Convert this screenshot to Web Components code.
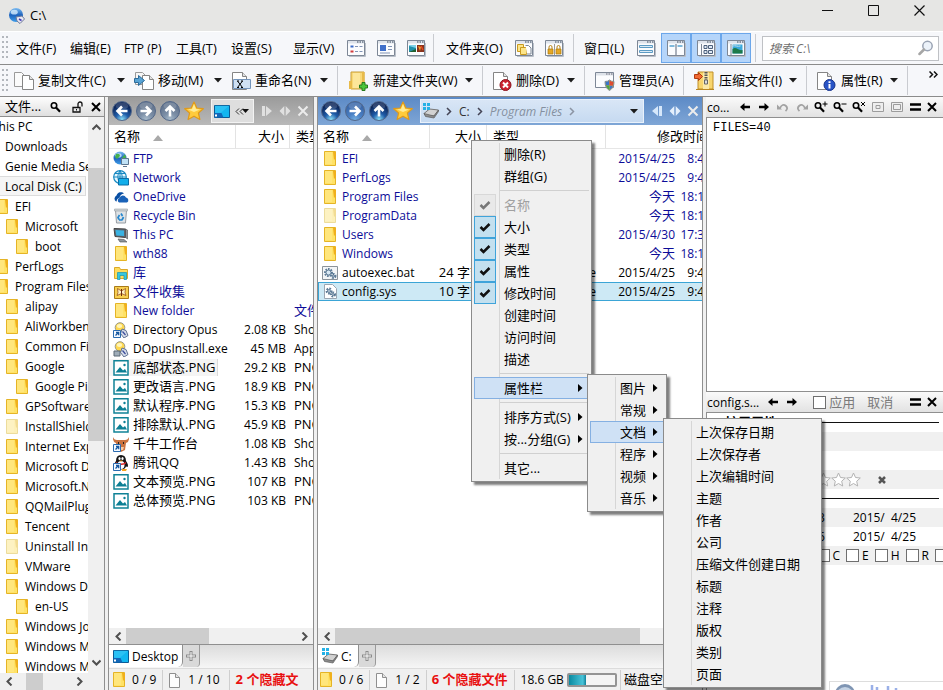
<!DOCTYPE html>
<html lang="zh-CN">
<head>
<meta charset="utf-8">
<title>C:\</title>
<style>
html,body{margin:0;height:100%;overflow:hidden}
body{font:12px/19px "Open Sans","Noto Sans CJK SC",sans-serif;color:#000;background:#e6e6e3}
</style>
</head>
<body>
<op-app></op-app>
<script>
const BASE=`*{box-sizing:border-box}
button{font:inherit;color:inherit;background:none;border:0;padding:0;margin:0;display:inline-flex;align-items:center;white-space:nowrap;cursor:default}
.cj{font-size:13px}`;
function define(tag,css,html){
  customElements.define(tag,class extends HTMLElement{
    connectedCallback(){
      if(this.shadowRoot)return;
      const t=document.createElement('template');
      t.innerHTML=`<style>${BASE}${css}</style>${typeof html==='function'?html(this):html}`;
      this.attachShadow({mode:'open'}).append(t.content.cloneNode(true));
    }
  });
}
const tx=s=>/[\u4e00-\u9fff]/.test(s)?`<span class="cj">${s}</span>`:`<span>${s}</span>`;
const ic=n=>`<op-icon name="${n}"></op-icon>`;

const win=b=>[20,20,`<path d="M1.5 2.500h17v15h-17z" fill="#fbfcfe" stroke="#7d8796"/><path d="M2 3h16v2.500H2z" fill="#dfe4ec"/><path d="M11 4h1.500M13.500 4h1.500M16 4h1.500" stroke="#6c7788" stroke-width="1.500"/><path d="M3 18.500h16.500V5" fill="none" stroke="#b9bfc8"/>${b}`];
const page='<path d="M1.500 1.500h6l4 4v10h-10z" fill="#fdfdfd" stroke="#8f8f8f"/><path d="M7.500 1.500v4h4" fill="#e4e4e4" stroke="#8f8f8f"/>';
const fold=(f,s,d)=>[12,15,`<path d="M.5.500h11v14H.5z" fill="${f}" stroke="${s}"/><path d="M9 1h3v6l-2 2z" fill="${d}"/><path d="M1 1h7v12H1z" fill="#fff" opacity=".15"/>`];
const globe=(x,y,r)=>`<circle cx="${x}" cy="${y}" r="${r}" fill="url(#g)"/><ellipse cx="${x-r/4}" cy="${y-r/2.500}" rx="${r/2}" ry="${r/3}" fill="#dff1ff" opacity=".75"/>`;
const gdef='<defs><linearGradient id="g" x1="0" y1="0" x2="0" y2="1"><stop stop-color="#7bbcf2"/><stop offset=".5" stop-color="#1d62bd"/><stop offset="1" stop-color="#3f9de8"/></linearGradient></defs>';
const orb=(a,b,c,arrow)=>[20,20,`<defs><radialGradient id="o" cx=".5" cy=".95" r=".85"><stop stop-color="${a}"/><stop offset=".4" stop-color="${b}"/><stop offset=".9" stop-color="${c}"/></radialGradient></defs><circle cx="10" cy="10" r="9.500" fill="url(#o)" stroke="#53688a"/><ellipse cx="10" cy="5" rx="6.500" ry="3.500" fill="#fff" opacity=".16"/><path d="${arrow}" fill="none" stroke="#fff" stroke-width="2.600"/>`];
const L='M15.500 10H6M10 5.500 5.500 10l4.500 4.500',R='M4.500 10H14M10 5.500 14.500 10 10 14.500',U='M10 15.500V6M5.500 10 10 5.500l4.500 4.500';
const glass=m=>[14,12,`<circle cx="4" cy="4.500" r="2.700" fill="none" stroke="#000" stroke-width="1.600"/><path d="m6 6.500 4 4.200" stroke="#000" stroke-width="2.200"/>${m}`];
const png='<path d="M1 .8h14v14.200H1z" fill="#fff" stroke="#108296" stroke-width="1.500"/><path d="M2.500 12.500 7 7l3 3.500 2-1.500 2 3.500z" fill="#0c7f94"/><circle cx="11.500" cy="5" r="1.200" fill="#0c7f94"/>';
const link='<path d="M.5 8.500h7v7h-7z" fill="#f4f9ff" stroke="#2a6bb0"/><path d="M2.500 13.500 5.500 10.500M3 10.500h2.700v2.800" fill="none" stroke="#1557a0" stroke-width="1.300"/>';
const gear=(x,y,r)=>`<circle cx="${x}" cy="${y}" r="${r}" fill="none" stroke="#5d7c98" stroke-width="2" stroke-dasharray="1.600 1"/><circle cx="${x}" cy="${y}" r="${r-1}" fill="#d9e9f5" stroke="#41617e" stroke-width=".8"/>`;
const lens='<circle cx="7" cy="5.500" r="4.800" fill="#ffd84f" stroke="#9a9a8a"/><ellipse cx="6.500" cy="4" rx="2.700" ry="2" fill="#fff5b8"/><path d="m9 7 4 1.500 2 5-4 2.500-3.500-4.500z" fill="#d5dce9" stroke="#5f7192"/><path d="m9.500 9.500 3 3.500" stroke="#3a4b99" stroke-width="1.200"/>';
const ICONS={
 app:[18,18,gdef+globe(8,8,7)+'<path d="m8 10 6-1 2.500 3-4.500 4.500L9 14z" fill="#e8ebf4" stroke="#6d7899"/><path d="m11 12 2.500 1.500" stroke="#433bb4" stroke-width="1.500"/>'],
 tri:[8,5,'<path d="M0 0h8L4 4.500z" fill="#1c1c1c"/>'],
 sort:[10,6,'<path d="M0 6h10L5 0z" fill="#a9a9a9"/>'],
 v1:win('<path d="M4.500 13.500h3" stroke="#d23a3a" stroke-width="2"/><path d="M4.500 8.500h3" stroke="#3a6bc9" stroke-width="2"/><path d="M9 8.500h3M13.500 8.500h3M9 13.500h3M13.500 13.500h3" stroke="#8193b4"/>'),
 v2:win('<path d="M4 7h6v6H4z" fill="#3f6fca"/><path d="M12 8.500h4M12 11.500h4M4 15h10" stroke="#8193b4"/>'),
 v3:win('<path d="M3 7h7v7H3z" fill="#1f90ab"/><path d="M3 7h7v3L3 8z" fill="#7fd3ea"/><path d="m3 14 7-3v3z" fill="#22612f"/><path d="M11 7h7v7h-7z" fill="#87321c"/><path d="m12 8 3 1-1 4z" fill="#f0a030"/><path d="m15 8 2 4" stroke="#e24a20" stroke-width="1.500"/>'),
 f1:win('<path d="M3.500 6.500h6v7h-6z" fill="#fce58a" stroke="#c99a1f"/><path d="M6.500 9.500h6v7h-6z" fill="#fce58a" stroke="#c99a1f"/><path d="M11.500 7.500h3l2.500 2.500v6h-4" fill="#fff" stroke="#7d8796"/>'),
 f2:win('<path d="M4 11h5v5H4zM12 11h5v5h-5z" fill="#e5a826" stroke="#ab7508" stroke-width=".7"/><path d="M5 11V9a1.500 1.500 0 0 1 3 0v2M13 11V9a1.500 1.500 0 0 1 3 0v2" fill="none" stroke="#b9841a"/><path d="M10.500 6v11" stroke="#999"/>'),
 w1:win('<path d="M3.500 7.500h13v2h-13zM3.500 12.500h13v2h-13z" fill="#dcebf6" stroke="#5c9bc4"/>'),
 w2:win('<path d="M10 6v11" stroke="#7d8796" stroke-width="1.300"/><path d="M3.500 8h5M11.500 8h5" stroke="#58a2cf" stroke-width="1.600"/>'),
 w3:win('<path d="M5.500 6v11" stroke="#7d8796"/><path d="M8 7.500h3v3H8zM12.500 7.500h4v3h-4zM8 12.500h3v3H8zM12.500 12.500h4v3h-4z" fill="#dfe9f4" stroke="#4d607c"/>'),
 w4:win('<path d="M5 6v11" stroke="#7d8796"/><path d="M6.500 6.500h10v9h-10z" fill="#3aa9dc"/><path d="M6.500 11c4-3 5 2 10 1v3.500h-10z" fill="#1d7a4a"/><path d="M6.500 8c3-1 5 1 8 0" stroke="#c8ecfa"/>'),
 search:[16,16,'<circle cx="9.500" cy="6" r="4.700" fill="#edf3fa" stroke="#9aa3b3" stroke-width="1.500"/><path d="M6 9.500 1.500 14" stroke="#a6a6a6" stroke-width="2.500" stroke-linecap="round"/>'],
 copy:[20,20,'<path d="M.5 1.500h7l4 4v10H.5z" fill="#fbfbfb" stroke="#9a9a9a"/><path d="M8.500 4.500h7l4 4v10h-11z" fill="#fff" stroke="#858585"/><path d="M15.500 4.500v4h4" fill="#e2e2e2" stroke="#858585"/>'],
 move:[20,20,'<path d="M1.500 1.500h7l3 3v9h-10z" fill="#f6f6f6" stroke="#9a9a9a"/><path d="M8.500 4.500h7l4 4v10h-11z" fill="#fff" stroke="#858585"/><path d="M15.500 4.500v4h4" fill="#e2e2e2" stroke="#858585"/><path d="M.5 7.500h4v-3l6 5-6 5v-3h-4z" fill="#58a3d4" stroke="#2d6b9a"/>'],
 rename:[20,20,'<path d="M1.500 1.500h10l4 4v13h-14z" fill="#fff" stroke="#858585"/><path d="M11.500 1.500v4h4" fill="#e2e2e2" stroke="#858585"/><path d="M2.500 8.500h17v9h-17z" fill="#cfe0f2" stroke="#7394bb"/><path d="m6.500 10 5 6.500m0-6.500-5 6.500M6 10h2M10 10h2M6 16.500h2M10 16.500h2" stroke="#000"/>'],
 newf:[21,20,'<path d="M3 1h13v17H3z" fill="#f9d978" stroke="#c99f38"/><path d="M1 10h3v8H1zM14 1h2.500v14H14z" fill="#e8bb4b"/><path d="M5 2h7v15H5z" fill="#fdeba8" opacity=".7"/><path d="M14 11.500h3v2.500h2.500v3H17v2.500h-3V17h-2.500v-3H14z" fill="#4cc63a" stroke="#27791c"/>'],
 del:[19,20,'<path d="M.5 1.500h10l4 4v13H.5z" fill="#fff" stroke="#858585"/><path d="M10.500 1.500v4h4" fill="#e2e2e2" stroke="#858585"/><circle cx="12.500" cy="14" r="5.500" fill="#cc2230" stroke="#8c1520"/><path d="m10 11.500 5 5m0-5-5 5" stroke="#fff" stroke-width="2"/>'],
 admin:[20,20,'<path d="M.5 1.500h18v15H.5z" fill="#fbfcfe" stroke="#7d8796"/><path d="M1 2h17v2.500H1z" fill="#dde2e9"/><path d="M11 3h1.500M13.500 3H15M16 3h1.500" stroke="#667"/><path d="M14.500 9q1.500 1.500 4.500 1.500 0 6.500-4.500 9-4.500-2.500-4.500-9 3 0 4.500-1.500z" fill="#f2c52f" stroke="#7b8b9a"/><path d="M14.500 9.500q-1.500 1.300-4 1.500l.5 3.500h3.500z" fill="#3a75c9"/><path d="M14.500 14.500H18q-1 3-3.500 4.500z" fill="#3a75c9"/><path d="M14.500 14.500H11q1 3 3.500 4.500z" fill="#4aa641"/><path d="M14.500 9.500q1.500 1.300 4 1.500l-.5 3.500h-3.500z" fill="#de4a32"/>'],
 zip:[21,20,'<path d="M4 1h15v17H4z" fill="#f8d56e" stroke="#c08f28"/><path d="M9 1.500h6V18H9z" fill="#fbe9a9"/><path d="M12 1v9" stroke="#575757" stroke-width="3" stroke-dasharray="1.500 1"/><path d="M10.500 9h3v4h-3z" fill="#ddd" stroke="#666"/><path d="M2 18.500h18" stroke="#b98722"/><path d="M.5 3.500h4v-2l4 4-4 4v-2h-4z" fill="#f26a32" stroke="#b03a12"/>'],
 prop:[20,20,'<path d="M.5 1.500h10l4 4v13H.5z" fill="#fff" stroke="#858585"/><path d="M10.500 1.500v4h4" fill="#e2e2e2" stroke="#858585"/><circle cx="12.500" cy="14" r="5.500" fill="#2954c6" stroke="#17338a"/><path d="M12.500 10.200v1.800M12.500 13v4.500" stroke="#fff" stroke-width="2"/>'],
 back:orb('#8fe4fa','#1f5ca8','#0b2458',L),fwdG:orb('#a9bccc','#7d90a8','#64758e',R),upG:orb('#a9bccc','#7d90a8','#64758e',U),fwdB:orb('#74aee0','#4a80c4','#3a67a9',R),up:orb('#8fe4fa','#1f5ca8','#0b2458',U),
 star:[20,20,'<path d="m10 1 2.800 6 6.500.7-4.900 4.300 1.500 6.500L10 15.200 4.100 18.500 5.600 12 .7 7.700 7.200 7z" fill="#ffcb3c" stroke="#e09a1a" stroke-width="1.200" stroke-linejoin="round"/><path d="m10 3 2 5 4 .5-6 2.500-6-2.500L8 8z" fill="#ffec96"/>'],
 desk:[16,13,'<path d="M.5.500h15v12H.5z" fill="#12b6f0" stroke="#0b5b94"/><path d="M.5 8h7l2 4.500h-9z" fill="#1267b8"/><path d="M1 .8h14l-8 7H1z" fill="#3cc8f6" opacity=".6"/><path d="M1 10.500h2" stroke="#fff" stroke-width="2"/>'],
 dchev:[15,7,'<path d="M4 .5 1 3.500l3 3M8 .5 5 3.500l3 3" fill="none" stroke="#333"/><path d="M7 1h7l-3.500 4z" fill="#111"/>'],
 nPlay:[12,12,'<path d="M1 1h3v10H1zM5 1l6 5-6 5z" fill="#e0e0e0"/>'],
 nRev:[12,12,'<path d="M8 1h3v10H8zM7 1 1 6l6 5z" fill="#d6e7fa"/>'],
 nSw:[12,12,'<path d="M5.300 1 .5 6l4.800 5zM6.700 1l4.800 5-4.800 5z" fill="#e0e0e0"/>'],
 nSwB:[12,12,'<path d="M5.300 1 .5 6l4.800 5zM6.700 1l4.800 5-4.800 5z" fill="#e4effc"/>'],
 nX:[12,12,'<path d="m1.500 1.500 9 9m0-9-9 9" stroke="#ececec" stroke-width="2"/>'],
 x:[10,10,'<path d="m1 1 8 8M9 1 1 9" stroke="#000" stroke-width="2"/>'],
 sx:[8,8,'<path d="m1 1 6 6M7 1 1 7" stroke="#555" stroke-width="2.500"/>'],
 chev:[6,9,'<path d="m1 1 3.500 3.500L1 8" fill="none" stroke="#445" stroke-width="1.500"/>'],
 chevG:[6,9,'<path d="m1 1 3.500 3.500L1 8" fill="none" stroke="#8b94a3" stroke-width="1.500"/>'],
 disk:[16,16,'<path d="m1 10.500 5.500-4.500 9 1-4.500 6-8.500-.5z" fill="#d2d2d2" stroke="#777"/><path d="m1 10.500 1.500 3 8.500 1.500 4.500-6.500V7L11 13z" fill="#8d8d8d" stroke="#5c5c5c" stroke-width=".7"/><path d="M0 0h3v3H0zM4 0h3v3H4zM0 4h3v3H0zM4 4h3v3H4z" fill="#25b1e6"/>'],
 mag:glass(''),
 unlock:[11,12,'<path d="M1 6.500h7v4.500H1z" fill="none" stroke="#111" stroke-width="1.300"/><path d="M6 6V3a2 2 0 0 1 4 0v2.500" fill="none" stroke="#111" stroke-width="1.300"/><path d="M4.500 8v1.500" stroke="#111"/>'],
 al:[10,8,'<path d="M0 4 4.500 0v2.800H10v2.400H4.500V8z" fill="#000"/>'],ar:[10,8,'<path d="M10 4 5.500 0v2.800H0v2.400h5.500V8z" fill="#000"/>'],
 undo:[12,10,'<path d="M3 6q2.500-5 6-2 2.500 2.500-.5 5" fill="none" stroke="#a2a2a2" stroke-width="1.800"/><path d="M0 2.500 5 7.500H0z" fill="#a2a2a2"/>'],
 redo:[12,10,'<path d="M9 6q-2.500-5-6-2-2.500 2.500.5 5" fill="none" stroke="#a2a2a2" stroke-width="1.800"/><path d="m12 2.500-5 5h5z" fill="#a2a2a2"/>'],
 zin:glass('<path d="M11 .5v5M8.500 3h5" stroke="#000"/>'),zout:glass('<path d="M8.500 3h5" stroke="#000"/>'),zx:glass('<path d="m9 1 4 4m0-4-4 4" stroke="#000"/>'),
 fit:[12,10,'<path d="M.5.500h11v9H.5z" fill="#eee" stroke="#9c9c9c"/><path d="M4 3.500h4v3H4z" fill="none" stroke="#9c9c9c"/>'],
 full:[12,10,'<path d="M.5.500h11v9H.5z" fill="#eee" stroke="#9c9c9c"/><path d="M2.500 2.500h7v5h-7z" fill="none" stroke="#9c9c9c"/>'],
 eq:[11,8,'<path d="M0 1.500h11M0 6.500h11" stroke="#000" stroke-width="2.600"/>'],
 folder:fold('#ffe266','#e5b426','#f0b01c'),folderL:fold('#fdf0b8','#ecdc9c','#f2dc94'),
 file:[13,16,page],
 ftp:[16,16,gdef+globe(7,7,6.500)+'<path d="M3 3q4-1 4 2l-3 3-2-2zM8 8l4-5 1 4-2 4z" fill="#45b04d"/><path d="M8.500 7.500h7v6h-7z" fill="#bfe1f5" stroke="#5d7790"/><path d="M10 15.500h4" stroke="#5d7790"/>'],
 net:[16,16,'<circle cx="7" cy="7" r="6.300" fill="#e6f6fd" stroke="#1789c2" stroke-width="1.200"/><path d="M.7 7h12.600M7 .7v12.600M2 3.500h10M7 .7q-4.500 6 0 12.600M7 .7q4.500 6 0 12.600" fill="none" stroke="#1789c2"/><path d="M5.500 8.500h10v6.500h-10z" fill="#12aeea" stroke="#0b6ea6"/>'],
 one:[16,12,'<path d="M3 10.500a3.500 3.500 0 0 1 .5-6A4.500 4.500 0 0 1 11 2.500Q7 3 6.500 7 4 7 3.500 10.500z" fill="#0a4fa3"/><path d="M6 11.500a2.500 2.500 0 0 1 .5-4.500 3.500 3.500 0 0 1 6.500-.5 2.700 2.700 0 0 1 1 5z" fill="#1a62b8"/>'],
 bin:[14,16,'<path d="M1.500 2h11L11.500 15h-9z" fill="#dfe3e6" stroke="#979da3"/><path d="M.5 1h13v2H.5z" fill="#cfd4d8" stroke="#979da3" stroke-width=".6"/><path d="m7 5.500 1.500 2.500M9.500 9 8 12M5 11.500 4 9.500l1.500-2.500M5 12h3" fill="none" stroke="#2687cd" stroke-width="1.700"/>'],
 pc:[16,16,'<path d="M1 1.500 12.500 2v8.500L2 9.500z" fill="#5d6771" stroke="#444"/><path d="M2.500 3 11 3.500V9L3.300 8.500z" fill="#39b3e3"/><path d="m12.500 2 2 1v9l-2-1.500zM5 12l6 .5 3 2.500H7z" fill="#8c949b" stroke="#4d4d4d" stroke-width=".6"/>'],
 lib:[15,14,'<path d="M.5 1.500h5l1 2h7v9H.5z" fill="#fddc5c" stroke="#dba92a"/><path d="M3.500 6.500h9v7h-2.500v-4H6v4H3.500z" fill="#35c7e0" stroke="#1495b0" stroke-width=".7"/>'],
 coll:[15,15,'<path d="M.5 2.500h14v12H.5z" fill="#f7cf50" stroke="#a97a18"/><path d="m7.500 7-4-2.500.5 4-1 3 4.500-2 4.500 2-1-3 .5-4z" fill="#fff3c6" stroke="#98511b" stroke-width=".8"/><path d="M7.500 5v7" stroke="#6b2a10"/>'],
 dop:[16,16,lens+link],exe:[16,16,lens+'<path d="M1 10h6v5H1z" fill="#9fadb9" stroke="#5a6875"/>'],
 png:[16,16,png],
 bull:[16,16,'<path d="M0 1q1 3 4 3h8q3 0 4-3 .5 5-3 6l-1 7-4 2-4-2-1-7Q-.5 6 0 1z" fill="#ca7340"/><path d="M5 11h6l-1 3H6z" fill="#f7c9a3"/><path d="M5 7h1M10 7h1" stroke="#222" stroke-width="2"/>'+link],
 qq:[16,16,'<path d="M8 0q5 0 5 6 3 4 1.500 6l-1.500-.5q-1 3-5 3t-5-3l-1.500.5Q0 10 3 6q0-6 5-6z" fill="#161616"/><ellipse cx="8" cy="10" rx="3.500" ry="4" fill="#fff"/><path d="M3 7q5 3 10 0v1.500q-5 3-10 0z" fill="#dc2525"/><ellipse cx="6.500" cy="3.500" rx="1.100" ry="1.600" fill="#fff"/><ellipse cx="9.500" cy="3.500" rx="1.100" ry="1.600" fill="#fff"/><path d="M6 5.500h4l-2 1.300zM9 14h5l-1 2H9z" fill="#f6a21b"/>'+link],
 bat:[16,14,'<path d="M.5.500h15v13H.5z" fill="#f3f5f7" stroke="#8b939b"/>'+gear(6.500,6.500,3.500)+gear(11.500,10,2)],
 sys:[13,15,'<path d="M.5.500h8l4 4v10H.5z" fill="#fff" stroke="#9aa6b2"/>'+gear(5,7,2.400)+gear(9,10.500,2)],
 plus:[10,10,'<path d="M5 0v10M0 5h10" stroke="#8b8b8b" stroke-width="3"/><path d="M5 1v8M1 5h8" stroke="#fff"/>'],
 check:[12,10,'<path d="m1.500 5 3 3L10.500 2" fill="none" stroke="currentColor" stroke-width="2.500"/>'],
 sub:[5,8,'<path d="M0 0v8l4.500-4z" fill="#000"/>'],
 st:[15,15,'<path d="m7.500 1 2 4.500 4.800.5-3.600 3.200 1 4.800-4.200-2.500L3.300 14l1-4.800L.7 6l4.800-.5z" fill="#fff" stroke="#b3b3b3"/>'],
 cl:[8,9,'<path d="M6.500.500 2.500 4.500l4 4" fill="none" stroke="#4f4f4f" stroke-width="2"/>'],
 cr:[8,9,'<path d="m1.500.5 4 4-4 4" fill="none" stroke="#4f4f4f" stroke-width="2"/>'],
 cu:[9,8,'<path d="m.5 6.500 4-4 4 4" fill="none" stroke="#4f4f4f" stroke-width="2"/>'],
 cd:[9,8,'<path d="m.5 1.500 4 4 4-4" fill="none" stroke="#4f4f4f" stroke-width="2"/>'],
 minus:[9,9,'<path d="M.5.500h8v8h-8zM2.500 4.500h4" fill="#fff" stroke="#333"/>'],
 more:[9,8,'<path d="m.5.500 3 3-3 3M5 .5l3 3-3 3" fill="none" stroke="#111" stroke-width="1.500"/>'],
 min:[11,11,'<path d="M0 5.500h11" stroke="#111"/>'],max:[11,11,'<path d="M.5.500h10v10H.5z" fill="none" stroke="#111"/>'],close:[11,11,'<path d="m.5.500 10 10m0-10-10 10" stroke="#111" stroke-width="1.200"/>'],
 logo:[70,8,'<circle cx="15" cy="12" r="10" fill="#7f95b3"/><circle cx="15" cy="14" r="9" fill="#c5d3e4"/><path d="M42 3v5M47 5v3M58 4v4M66 6v2" stroke="#9ab0e8" stroke-width="2.500"/>']
};
define('op-icon',':host{display:inline-flex;flex:none}svg{display:block}',e=>{const [w,h,b]=ICONS[e.getAttribute('name')];return `<svg width="${w}" height="${h}" viewBox="0 0 ${w} ${h}" aria-hidden="true">${b}</svg>`});

define('op-title',`:host{display:flex;align-items:center;height:31px;padding:0 18px 0 8px;background:#e6e6e4;flex:none}
h1{font-size:13px;font-weight:400;margin:0 auto 0 4px}
button{margin-left:35px;height:24px;align-items:flex-start;padding-top:1px}button:first-of-type{margin:0}`,
`${ic('app')}<h1>C:\\</h1><button aria-label="最小化">${ic('min')}</button><button aria-label="最大化">${ic('max')}</button><button aria-label="关闭">${ic('close')}</button>`);

define('op-grip',`:host{display:block;width:6px;align-self:stretch;margin:4px 0 4px 2px;flex:none;background-image:radial-gradient(circle at 1px 1px,#b3b7bd 1px,transparent 1px);background-size:4px 5px}`,'');
const rule='i{width:1px;align-self:stretch;margin:2px 0;background:#c9cbd0;flex:none}';
const M=(s,w)=>`<button style="flex:0 0 ${w}px">${tx(s)}</button>`;
const I=(n,l,c='')=>`<button class="ico ${c}" aria-label="${l}">${ic(n)}</button>`;
define('op-menubar',`:host{display:flex;align-items:center;height:34px;background:#f6f7fa;border-top:1px solid #fff;border-bottom:1px solid #8b8b8b;flex:none}${rule}
nav{display:flex;align-items:center;padding-left:8px;align-self:stretch}
.ico{width:30px;height:30px;justify-content:center}.on{background:#b5d5fa;border:1px solid #6ba6ea}
.i1{margin:2px 12px 2px 2px}.i2{margin:2px 10px 2px 4px}.i3{margin-left:4px}
label{display:flex;align-items:center;flex:1;min-width:0;height:25px;margin:0 4px 0 6px;padding:0 4px 0 6px;background:#fff;border:1px solid #bfc1c5}
input{flex:1;min-width:0;border:0;padding:0;font:italic 12px "Open Sans","Noto Sans CJK SC",sans-serif;outline:0;background:none}input::placeholder{color:#6e6e6e}`,
`<op-grip></op-grip><nav>${M('文件(F)',54)}${M('编辑(E)',54)}${M('FTP (P)',52)}${M('工具(T)',55)}${M('设置(S)',62)}${M('显示(V)',48)}${I('v1','列表')}${I('v2','详细')}${I('v3','缩略图')}<i class="i1"></i>${M('文件夹(O)',63)}${I('f1','平铺')}${I('f2','锁定')}<i class="i2"></i>${M('窗口(L)',47)}${I('w1','单窗')}${I('w2','双窗','on')}${I('w3','树','on')}${I('w4','预览','on')}<i class="i3"></i></nav><label><input type="text" placeholder="搜索 C:\\" aria-label="搜索">${ic('search')}</label>`);

const T=(n,s,w,a=1)=>`<button style="flex:0 0 ${w}px">${ic(n)}${tx(s)}${a?'<op-icon class="a" name="tri"></op-icon>':''}</button>`;
define('op-toolbar',`:host{display:flex;align-items:center;height:32px;background:#f6f7fa;border-bottom:1px solid #8b8b8b;flex:none}${rule}
button{gap:4px;height:30px;padding-right:9px}.a{margin-left:auto}i{margin:1px 10px 1px 0}
op-grip{margin-right:6px}
.m{margin:0 0 12px auto;padding:0 5px 0 0}`,
`<op-grip></op-grip>${T('copy','复制文件(C)',120)}${T('move','移动(M)',97)}${T('rename','重命名(N)',106)}<i></i>${T('newf','新建文件夹(W)',134)}<i></i>${T('del','删除(D)',91)}<i></i>${T('admin','管理员(A)',87,0)}<i></i>${T('zip','压缩文件(I)',112)}<i></i>${T('prop','属性(R)',90)}<i></i><button class="m" aria-label="更多">${ic('more')}</button>`);

define('op-scroll',`:host{display:flex;background:#f0f0f0;flex:none;align-items:center}
:host([dir=h]){height:16px}:host([dir=v]){width:16px;flex-direction:column}
button{flex:0 0 17px;justify-content:center;align-self:stretch}:host([dir=v]) button{flex-basis:20px}
div{flex:1;align-self:stretch;display:flex;min-width:0;min-height:0}:host([dir=v]) div{flex-direction:column}
b{background:#cdcdcd;flex:0 0 var(--len)}span{flex:0 0 var(--start,0%)}`,
e=>{const h=e.getAttribute('dir')==='h';return `<button aria-label="后退">${ic(h?'cl':'cu')}</button><div><span></span><b></b></div><button aria-label="前进">${ic(h?'cr':'cd')}</button>`});

const TREE=[['This PC',22],['Downloads',35],['Genie Media Server',35],['Local Disk (C:)',34,'sel'],['EFI',26,'f'],['Microsoft',36,'f'],['boot',46,'f'],['PerfLogs',26,'f'],['Program Files',26,'f'],['alipay',36,'f'],['AliWorkbench',36,'f'],['Common Files',36,'f'],['Google',36,'f'],['Google Pinyin',46,'f'],['GPSoftware',36,'f'],['InstallShield',36,'l'],['Internet Explorer',36,'f'],['Microsoft Deploy',36,'f'],['Microsoft.NET',36,'f'],['QQMailPlugin',36,'f'],['Tencent',36,'f'],['Uninstall Information',36,'l'],['VMware',36,'f'],['Windows Defender',36,'f'],['en-US',46,'f'],['Windows Journal',36,'f'],['Windows Mail',36,'f'],['Windows Media',36,'f']];
define('op-tree',`:host{display:flex;flex-direction:column;flex:none;width:105px;border-right:1px solid #8f8f8f;background:#fff;min-height:0}
header{display:flex;align-items:center;height:19px;background:linear-gradient(#fdfdfd,#dfdfdf);padding:0 3px 0 5px;flex:none}
header .cj{margin-right:auto}header button{margin-left:8px}
.b{flex:1;display:flex;min-height:0;border-top:1px solid #8f8f8f}
.v{flex:1;overflow:hidden;min-width:0}
ul{list-style:none;margin:-1px 0 0 -30px;padding:0}
li{display:flex;align-items:center;gap:7px;height:20px;white-space:nowrap}
.sel{border:1px solid #dcdcdc;background:#f5f5f5;width:116px}
op-scroll[dir=h]{height:17px}`,
`<header>${tx('文件...')}<button aria-label="查找">${ic('mag')}</button><button aria-label="锁定">${ic('unlock')}</button><button aria-label="关闭">${ic('x')}</button></header>
<div class="b"><div class="v"><ul>${TREE.map(([n,p,k])=>`<li class="${k==='sel'?'sel':''}" style="padding-left:${p}px">${k==='f'?ic('folder'):k==='l'?ic('folderL'):''}<span>${n}</span></li>`).join('')}</ul></div><op-scroll dir="v" style="--start:6%;--len:53%"></op-scroll></div><op-scroll dir="h" style="--start:16%;--len:33%;padding-right:16px"></op-scroll>`);

const PANES={
 left:{nav:['back','fwdG','upG','star'],end:['nPlay','nSw','nX'],cols:[127,54,120],heads:['名称','大小','类型'],
  rows:[['ftp','FTP',,,1],['net','Network',,,1],['one','OneDrive',,,1],['bin','Recycle Bin',,,1],['pc','This PC',,,1],['folder','wth88',,,1],['lib','库',,,1],['coll','文件收集',,,1],['folder','New folder','','文件夹',1],['dop','Directory Opus','2.08 KB','Shortcut'],['exe','DOpusInstall.exe','45 MB','Application'],['png','底部状态.PNG','29.2 KB','PNG 图像',0,'hot'],['png','更改语言.PNG','18.9 KB','PNG 图像'],['png','默认程序.PNG','15.3 KB','PNG 图像'],['png','排除默认.PNG','45.9 KB','PNG 图像'],['bull','千牛工作台','1.08 KB','Shortcut'],['qq','腾讯QQ','1.43 KB','Shortcut'],['png','文本预览.PNG','107 KB','PNG 图像'],['png','总体预览.PNG','103 KB','PNG 图像']],
  path:`${ic('desk')}${ic('dchev')}`,len:'49%',tab:['desk','Desktop'],counts:['0 / 9','1 / 10','2 个隐藏文']},
 right:{nav:['back','fwdB','up','star'],end:['nRev','nSwB','nX'],cols:[112,57,119,73,39],heads:['名称','大小','类型','修改时间'],
  rows:[['folder','EFI','','',1,,'2015/4/25','8:42'],['folder','PerfLogs','','',1,,'2015/4/25','9:41'],['folder','Program Files','','',1,,'今天','18:12'],['folderL','ProgramData','','',1,,'今天','18:12'],['folder','Users','','',1,,'2015/4/30','17:31'],['folder','Windows','','',1,,'今天','18:13'],['bat','autoexec.bat','24 字节','Windows Batch File',0,,'2015/4/25','9:42'],['sys','config.sys','10 字节','System file',0,'sel','2015/4/25','9:42']],
  path:`${ic('disk')}${ic('chev')}<a href="#">C:</a>${ic('chev')}<a href="#" class="g">Program Files</a>${ic('chevG')}<button class="dd" aria-label="历史">${ic('tri')}</button>`,len:'87%',tab:['disk','C:'],counts:['0 / 6','1 / 2','6 个隐藏文件']}
};
define('op-pane',`:host{display:flex;flex-direction:column;min-width:0;background:#fff;border:solid #8f8f8f;border-width:0 1px;flex:none;width:206px}
:host([side=right]){flex:1}
.bar{display:flex;align-items:center;height:28px;flex:none;gap:4px;padding:0 4px 0 3px;background:linear-gradient(#9b9b9b,#b9b9b9)}
:host([side=right]) .bar{background:linear-gradient(#5c8ac6,#7fa6d6);padding-right:3px}
.path{display:flex;align-items:center;gap:5px;flex:1;min-width:0;height:24px;padding:0 2px;margin:0 1px 0 3px;background:#dedede;border:1px solid #f3f3f3;overflow:hidden}
:host([side=right]) .path{background:linear-gradient(#d9e6f6,#c6daf1);border-color:#e9f1fb;gap:7px}
a{color:#333;text-decoration:none;white-space:nowrap}.g{font-style:italic;color:#8590a0}.dd{margin-left:auto;padding-right:3px}
.end{margin-left:2px}
.list{flex:1;overflow:hidden;min-height:0}
table{border-collapse:separate;border-spacing:0;table-layout:fixed}
th{font-weight:400;font-size:13px;height:24px;padding:0 5px;text-align:left;border-bottom:1px solid #e6e6e6;border-right:1px solid #e3e3e3;white-space:nowrap;overflow:hidden}
th:last-child{border-right:0}th:nth-child(2){text-align:right}th:nth-child(3){padding-left:6px}th[colspan]{text-align:right;padding-right:9px}
th op-icon{margin:0 0 3px 13px}
td{height:19px;padding:0;white-space:nowrap;overflow:hidden;line-height:17px;border:solid transparent;border-width:1px 0}
td>div{display:flex;align-items:center;height:17px}
td>div>div{flex:0 0 24px;display:flex;justify-content:center}
td:nth-child(2),td:nth-child(4){text-align:right;padding-right:4px}td:nth-child(3){padding-left:4px}td:nth-child(5){text-align:right;padding-right:7px}
td.t{text-align:right;padding:0 10px 0 0}
.dir td{color:#0c0c98}
.hot td:first-child>div{width:108px;background:#f4f4f4;outline:1px solid #dadada;outline-offset:0}
.sel td{background:#cde9f5;border-color:#3ba5d6}.sel td:first-child{box-shadow:inset 1px 0 #3ba5d6}
.tabs{display:flex;height:24px;flex:none;border-top:1px solid #8f8f8f;background:linear-gradient(#dcdcdc,#f6f6f6);align-items:flex-start}
.tab{height:22px;gap:3px;padding:0 4px;background:#fff;border-right:1px solid #8f8f8f;border-radius:0 0 5px 0}
:host([side=right]) .tab{padding-right:6px}
.add{height:22px;padding:0 3px;background:#d9d9d9;border-right:1px solid #999;border-radius:0 0 4px 0}
footer{display:flex;align-items:center;height:22px;flex:none;background:#f0f0f0;border-top:1px solid #dcdcdc;white-space:nowrap;overflow:hidden}
footer>span{display:flex;align-items:center;height:20px;padding:0 6px;gap:7px;border-right:1px solid #cfcfcf;flex:none}
footer>span:first-child{padding-left:4px}footer>span:nth-child(2){padding:0 9px 0 5px}
:host([side=right]) footer>span:nth-child(2){padding-right:6px}
:host([side=right]) footer>span:first-child{padding-left:2px}
footer>.red{color:#e81010;font-weight:700;font-size:13px}
:host([side=left]) footer>.red{border:0}
:host([side=right]) footer>.red{padding:0 6px 0 5px}
.cap{width:50px;height:14px;border:2px solid #949494;border-radius:2px;background:linear-gradient(90deg,#0a8aa0,#49c3d8 30%,#1688a0 36%,#f4f4f4 36%)}
footer>.last{border:0;padding:0 0 0 3px;font-size:13px}footer>.sp{gap:3px;padding-right:3px}`,
e=>{const r=e.getAttribute('side')==='right',p=PANES[r?'right':'left'];
 return `<div class="bar">${p.nav.map(n=>`<button aria-label="${n}">${ic(n)}</button>`).join('')}<div class="path">${p.path}</div>${p.end.map(n=>`<button class="end" aria-label="${n}">${ic(n)}</button>`).join('')}</div>
<div class="list"><table style="width:${p.cols.reduce((a,b)=>a+b)}px"><colgroup>${p.cols.map(w=>`<col style="width:${w}px">`).join('')}</colgroup><thead><tr>${p.heads.map((h,i)=>`<th${i===3?' colspan="2"':''}>${h}${i?'':ic('sort')}</th>`).join('')}</tr></thead><tbody>${p.rows.map(([i,n,s='',t='',d,c='',a,b])=>`<tr class="${d?'dir':''} ${c}"><td><div><div>${ic(i)}</div>${tx(n)}</div></td><td>${tx(s)}</td><td class="${r?'t':''}">${tx(t)}</td>${r?`<td>${tx(a)}</td><td>${b}</td>`:''}</tr>`).join('')}</tbody></table></div>
<op-scroll dir="h" style="--len:${p.len}"></op-scroll>
<div class="tabs"><button class="tab">${ic(p.tab[0])}${tx(p.tab[1])}</button><button class="add" aria-label="新标签">${ic('plus')}</button></div>
<footer><span>${ic('folder')}${p.counts[0]}</span><span>${ic('file')}${p.counts[1]}</span><span class="red">${p.counts[2]}</span>${r?`<span class="sp">18.6 GB<span class="cap" role="img" aria-label="磁盘用量"></span></span><span class="last">磁盘空间</span>`:''}</footer>`});

const hd='header{display:flex;align-items:center;height:20px;background:linear-gradient(#fafafa,#e2e2e2);padding:0 5px 0 1px;flex:none}header>button{flex:0 0 19px;justify-content:center}header>:first-child{margin-right:auto}';
define('op-viewer',`:host{display:flex;flex-direction:column;flex:0 0 auto;height:295px}${hd}header>:last-child{flex-basis:13px}
pre{margin:0;flex:1;background:#fff;border:solid #8f8f8f;border-width:1px 0 1px 1px;padding:2px 6px;font:12px/16px "Liberation Mono",monospace}`,
`<header><span>co...</span>${['al','ar','undo','redo','zin','zout','zx','fit','full','eq','x'].map(n=>`<button aria-label="${n}">${ic(n)}</button>`).join('')}</header><pre>FILES=40</pre>`);

const chk=s=>`<label><input type="checkbox">${s}</label>`;
define('op-meta',`:host{display:flex;flex-direction:column;flex:1;min-height:0;background:#fff}${hd}
header>:first-child{margin-right:4px}header>.apply{margin:0 0 0 12px}header .c{flex:0 0 auto;margin:0 auto 0 12px}header>:last-child{flex-basis:13px}
.apply,.c{color:#7b7b7b;font-size:13px;display:flex;align-items:center;gap:3px}
input{appearance:none;width:13px;height:13px;margin:0;border:1px solid #6f6f6f;background:#fff}
section{flex:1;border:solid #8f8f8f;border-width:1px 0 0 1px;overflow:hidden;display:flex;flex-direction:column;min-height:0}
.r{height:19px;flex:none;display:flex;align-items:center;justify-content:flex-end;white-space:nowrap}
.r:nth-child(even){background:#f0f0f0}
h2{margin:0;font-size:13px;font-weight:700}.h{padding:0 4px;gap:5px}.h::after{content:"";flex:1;height:1px;background:#111}
.s{padding-right:57px}.s button{margin-left:17px}
.d{gap:28px;padding-right:27px}
.k{gap:6px}.k label{display:flex;align-items:center;gap:3px}.k>input{width:8px;border-right:0}
footer{display:flex;align-items:flex-start;margin:auto 0 0 122px;height:9px;border:solid #ddd;border-width:1px 0 0 1px;overflow:hidden}`,
`<header><span>config.s...</span><button aria-label="上一个">${ic('al')}</button><button aria-label="下一个">${ic('ar')}</button><label class="apply"><input type="checkbox">应用</label><button class="c">取消</button><button aria-label="菜单">${ic('eq')}</button><button aria-label="关闭">${ic('x')}</button></header>
<section><div class="r h">${ic('minus')}<h2>扩展属性</h2></div><div class="r"></div><div class="r"></div><div class="r s">${ic('st').repeat(5)}<button aria-label="清除">${ic('sx')}</button></div><div class="r h"></div><div class="r d"><span>18:43</span><span>2015/&nbsp; 4/25</span></div><div class="r d"><span>18:46</span><span>2015/&nbsp; 4/25</span></div><div class="r k">${['A','C','E','H','R'].map(chk).join('')}<input type="checkbox" aria-label="S"></div><footer>${ic('logo')}</footer></section>`);

// Item prefixes: ~ disabled and checked, + checked, * highlighted; a trailing > opens a submenu.
const MENUS={cols:['删除(R)','群组(G)','-','~名称','+大小','+类型','+属性','+修改时间','创建时间','访问时间','描述','-','*属性栏>','-','排序方式(S)>','按...分组(G)>','-','其它...'],
props:['图片>','常规>','*文档>','程序>','视频>','音乐>'],
doc:['上次保存日期','上次保存者','上次编辑时间','主题','作者','公司','压缩文件创建日期','标题','注释','版权','类别','页面']};
define('op-menu',`:host{position:absolute;z-index:2;background:#f0f0f0;border:1px solid #8b8b8b;padding:2px;box-shadow:3px 3px 2px rgba(0,0,0,.5);--gut:26px}
.m{display:flex;flex-direction:column;background:linear-gradient(90deg,transparent calc(var(--gut) - 1px),#d6d6d6 calc(var(--gut) - 1px),#d6d6d6 var(--gut),transparent var(--gut))}
button{height:22px;font-size:13px;line-height:18px;padding-right:6px}
button>span:first-child{flex:0 0 calc(var(--gut) + 4px);display:flex;align-self:stretch}
.hi{background:#cfe1f5;box-shadow:inset 0 0 0 1px #85b0e2;margin-right:-2px;padding-right:8px}
.ck{width:22px;display:flex;align-items:center;justify-content:center;background:#c3e0ef;border:1px solid #3fa3da;color:#111}
.off{color:#a0a0a0}.off .ck{background:#e9e9e9;border-color:#d8d8d8;color:#777}
op-icon.a{margin-left:auto}
hr{margin:3px 0 3px var(--gut);border:0;height:1px;background:#d0d0d0;align-self:stretch}`,
e=>`<div class="m" role="menu">${MENUS[e.getAttribute('kind')].map(s=>{if(s==='-')return '<hr>';const c=s[0],off=c==='~',ck=c==='+'||off,hi=c==='*',sub=s.endsWith('>');const name=s.replace(/^[~+*]/,'').replace(/>$/,'');return `<button role="menuitem" class="${off?'off':''}${hi?'hi':''}"><span>${ck?`<span class="ck">${ic('check')}</span>`:''}</span>${name}${sub?'<op-icon class="a" name="sub"></op-icon>':''}</button>`}).join('')}</div>`);

define('op-app',`:host{display:flex;flex-direction:column;height:100vh;position:relative;overflow:hidden}
main{flex:1;display:flex;min-height:0;gap:3px;background:#f0f0f0}
aside{width:237px;flex:none;display:flex;flex-direction:column;min-height:0}
op-menu.a{left:471px;top:140px;width:121px}op-menu.b{left:587px;top:374px;width:80px}op-menu.c{left:663px;top:418px;width:159px}`,
`<op-title></op-title><op-menubar></op-menubar><op-toolbar></op-toolbar><main><op-tree></op-tree><op-pane side="left"></op-pane><op-pane side="right"></op-pane><aside><op-viewer></op-viewer><op-meta></op-meta></aside></main><op-menu class="a" kind="cols"></op-menu><op-menu class="b" kind="props"></op-menu><op-menu class="c" kind="doc"></op-menu>`);
</script>
</body>
</html>
